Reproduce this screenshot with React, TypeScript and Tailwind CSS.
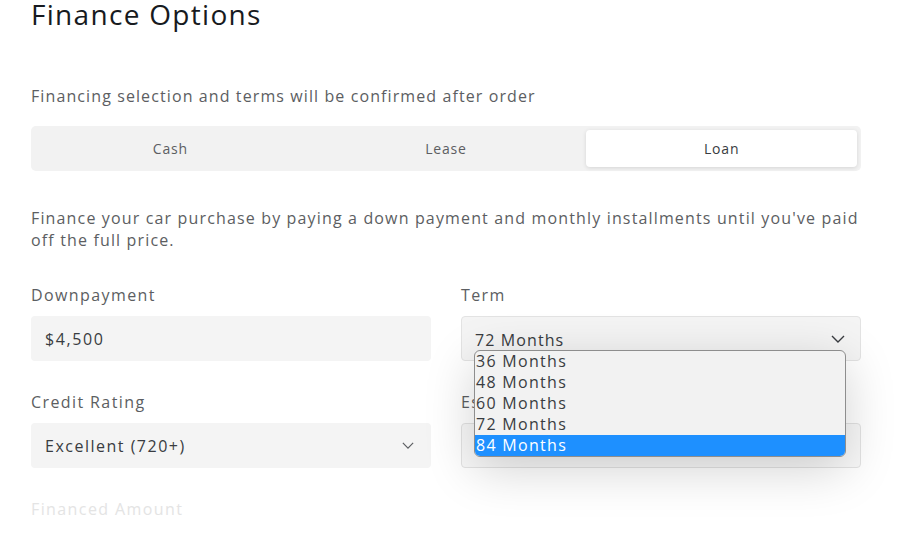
import React from 'react';

const font = { fontFamily: '"Open Sans", "Liberation Sans", sans-serif' };

const Chevron = ({ className }: { className?: string }) => (
  <svg viewBox="0 0 14 8" className={className} fill="none" stroke="currentColor" strokeWidth="1.4">
    <polyline points="1,1 7,7 13,1" />
  </svg>
);

const terms = ['36 Months', '48 Months', '60 Months', '72 Months', '84 Months'];

export default function App() {
  return (
    <div className="min-h-[558px] w-[905px] overflow-hidden bg-white pl-[31px] tracking-[1.1px]" style={font}>
      <div className="w-[830px]">
        <h1 className="text-[28px] leading-[28px] font-medium tracking-[1.3px] text-[#171a20]">Finance Options</h1>

        <p className="mt-[57px] text-[16px] leading-[22px] text-[#5c5e62]">
          Financing selection and terms will be confirmed after order
        </p>

        <div className="mt-[19px] grid h-[45px] grid-cols-3 gap-[5px] rounded-[5px] bg-[#f2f2f2] p-[4px] text-[14px] tracking-[0.8px]">
          <div className="flex items-center justify-center text-[#5c5e62]">Cash</div>
          <div className="flex items-center justify-center text-[#5c5e62]">Lease</div>
          <div className="flex items-center justify-center rounded-[4px] bg-white text-[#393c41] shadow-[0_1px_4px_rgba(0,0,0,0.12)]">
            Loan
          </div>
        </div>

        <p className="mt-[36px] whitespace-nowrap text-[16px] leading-[22px] tracking-[1.15px] text-[#5c5e62]">
          Finance your car purchase by paying a down payment and monthly installments until you've paid
          <br />
          off the full price.
        </p>

        <div className="mt-[33px] grid grid-cols-2 gap-x-[30px] gap-y-[30px]">
          <div>
            <div className="text-[16px] leading-[22px] tracking-[1.4px] text-[#5c5e62]">Downpayment</div>
            <div className="mt-[10px] flex h-[45px] items-center rounded-[4px] bg-[#f4f4f4] px-[14px] text-[16px] tracking-[1.6px] text-[#393c41]">
              $4,500
            </div>
          </div>

          <div className="relative z-10">
            <div className="text-[16px] leading-[22px] tracking-[1.4px] text-[#5c5e62]">Term</div>
            <div className="relative mt-[10px] flex h-[45px] items-center justify-between rounded-[4px] border border-[#e3e3e3] bg-[#f4f4f4] pl-[13px] pr-[15px] text-[16px] text-[#393c41]">
              <span className="pt-[3px]">72 Months</span>
              <Chevron className="h-[8px] w-[14px] text-[#393c41]" />
              <div className="absolute left-[12px] top-[33px] w-[372px] overflow-hidden rounded-[6px] border border-[#8e8e8e] bg-[#f2f2f2] tracking-[1.3px] shadow-[0_12px_50px_rgba(0,0,0,0.18)]">
                {terms.map((t, i) => (
                  <div
                    key={t}
                    className={
                      i === 4
                        ? 'h-[21px] bg-[#1e90ff] pl-[1px] text-[16px] leading-[21px] text-white'
                        : 'h-[21px] pl-[1px] text-[16px] leading-[21px] text-[#393c41]'
                    }
                  >
                    {t}
                  </div>
                ))}
              </div>
            </div>
          </div>

          <div>
            <div className="text-[16px] leading-[22px] tracking-[1.4px] text-[#5c5e62]">Credit Rating</div>
            <div className="mt-[10px] flex h-[45px] items-center justify-between rounded-[4px] bg-[#f4f4f4] pl-[14px] pr-[17px] text-[16px] tracking-[1.5px] text-[#393c41]">
              <span>Excellent (720+)</span>
              <Chevron className="h-[7px] w-[12px] text-[#5c5e62]" />
            </div>
          </div>

          <div>
            <div className="text-[16px] leading-[22px] tracking-[1.4px] text-[#5c5e62]">Estimated Payment</div>
            <div className="mt-[10px] h-[45px] rounded-[4px] border border-[#e3e3e3] bg-[#f8f8f8]" />
          </div>

          <div>
            <div className="text-[16px] leading-[22px] tracking-[1.4px] text-[#e4e4e4]">Financed Amount</div>
          </div>
        </div>
      </div>
    </div>
  );
}
